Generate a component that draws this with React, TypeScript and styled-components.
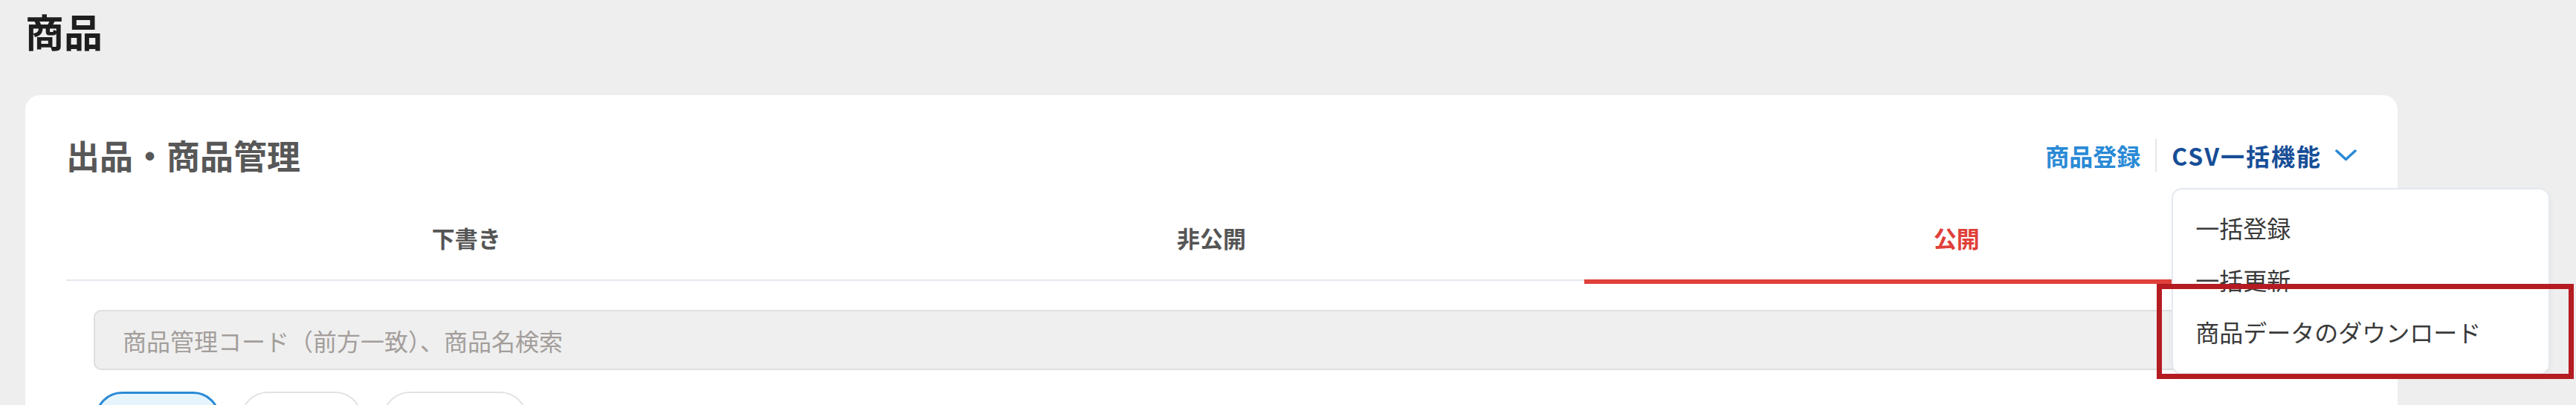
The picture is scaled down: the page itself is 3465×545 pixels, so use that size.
import React from "react";
import styled, { createGlobalStyle } from "styled-components";

const GlobalStyle = createGlobalStyle`
  html, body {
    margin: 0;
    padding: 0;
    background: #eeeeee;
  }

  body {
    font-family: "Noto Sans CJK JP", "Noto Sans", sans-serif;
    color: #333333;
  }
`;

const Page = styled.div`
  position: relative;
  height: 545px;
  overflow: hidden;
  padding: 6px 0 0 34px;
  box-sizing: border-box;
`;

const PageTitle = styled.h1`
  margin: 0 0 50px;
  font-size: 52px;
  line-height: 72px;
  font-weight: 700;
  color: #1e1e1e;
`;

const Card = styled.section`
  width: 3191px;
  min-height: 600px;
  padding: 48px 55px 0;
  box-sizing: border-box;
  background: #ffffff;
  border-radius: 20px;
`;

const CardHeader = styled.div`
  display: flex;
  align-items: center;
  justify-content: space-between;
  height: 66px;
`;

const CardTitle = styled.h2`
  margin: 0;
  font-size: 45px;
  line-height: 66px;
  font-weight: 700;
  color: #585858;
`;

const HeaderActions = styled.div`
  display: flex;
  align-items: center;
  gap: 20px;
`;

const TextLink = styled.a`
  font-size: 32px;
  font-weight: 700;
  color: #2a8ad6;
  text-decoration: none;
  line-height: 44px;
`;

const Divider = styled.span`
  width: 2px;
  height: 44px;
  background: #e6e6e6;
`;

const MenuWrap = styled.div`
  position: relative;
`;

const MenuButton = styled.button`
  display: flex;
  align-items: center;
  gap: 18px;
  padding: 0;
  border: 0;
  background: none;
  font-family: inherit;
  font-size: 32px;
  font-weight: 700;
  line-height: 44px;
  letter-spacing: 2px;
  color: #174e97;
  cursor: pointer;
`;

const Dropdown = styled.ul`
  position: absolute;
  top: calc(100% + 22px);
  left: 0;
  z-index: 5;
  width: 509px;
  margin: 0;
  padding: 16px 0 21px;
  box-sizing: border-box;
  list-style: none;
  background: #ffffff;
  border: 2px solid #e4e9f0;
  border-radius: 14px;
  box-shadow: 0 4px 10px rgba(0, 0, 0, 0.04);
`;

const MenuItem = styled.li`
  height: 70px;
  padding-left: 30px;
  font-size: 32px;
  line-height: 70px;
  color: #3a3a3a;
  white-space: nowrap;
`;

const Highlight = styled.div`
  position: absolute;
  left: -22px;
  top: 127px;
  width: 561px;
  height: 128px;
  box-sizing: border-box;
  border: 7px solid #b41c22;
  pointer-events: none;
`;

const TabList = styled.div`
  display: flex;
  margin-top: 22px;
  padding: 0 37px;
  border-bottom: 2px solid #e4e9ef;
`;

const Tab = styled.div<{ active?: boolean }>`
  position: relative;
  flex: 1;
  height: 112px;
  line-height: 112px;
  text-align: center;
  font-size: 31px;
  font-weight: 700;
  color: ${({ active }) => (active ? "#e0403a" : "#555555")};

  &::after {
    content: "";
    position: absolute;
    left: 0;
    right: 0;
    bottom: -6px;
    height: 6px;
    background: #e0403a;
    display: ${({ active }) => (active ? "block" : "none")};
  }
`;

const SearchBox = styled.input`
  display: block;
  width: calc(100% - 74px);
  height: 81px;
  margin: 39px 37px 0;
  padding: 0 0 0 37px;
  box-sizing: border-box;
  font-family: inherit;
  font-size: 32px;
  background: #efefef;
  border: 2px solid #dedede;
  border-radius: 10px;
  outline: none;

  &::placeholder {
    color: #a39e9b;
  }
`;

const FilterRow = styled.div`
  display: flex;
  gap: 28px;
  margin: 29px 0 0 39px;
`;

const Pill = styled.button<{ active?: boolean; w: number }>`
  width: ${({ w }) => w}px;
  height: 72px;
  border-radius: 36px;
  border: ${({ active }) => (active ? "3px solid #2a8ad6" : "2px solid #e2e2e2")};
  background: ${({ active }) => (active ? "#e6f5fd" : "#ffffff")};
`;

const Chevron = () => (
  <svg width="29" height="16" viewBox="0 0 29 16" fill="none">
    <polyline
      points="2,2 14.5,13.5 27,2"
      stroke="#2a8ad6"
      strokeWidth="3.5"
      strokeLinecap="round"
      strokeLinejoin="round"
    />
  </svg>
);

const menu = ["一括登録", "一括更新", "商品データのダウンロード"];
const tabs = [
  { label: "下書き", active: false },
  { label: "非公開", active: false },
  { label: "公開", active: true },
];

export default function App() {
  return (
    <>
      <GlobalStyle />
      <Page>
        <PageTitle>商品</PageTitle>
        <Card>
          <CardHeader>
            <CardTitle>出品・商品管理</CardTitle>
            <HeaderActions>
              <TextLink href="#">商品登録</TextLink>
              <Divider />
              <MenuWrap>
                <MenuButton>
                  CSV一括機能
                  <Chevron />
                </MenuButton>
                <Dropdown>
                  {menu.map((m) => (
                    <MenuItem key={m}>{m}</MenuItem>
                  ))}
                  <Highlight />
                </Dropdown>
              </MenuWrap>
            </HeaderActions>
          </CardHeader>

          <TabList>
            {tabs.map((t) => (
              <Tab key={t.label} active={t.active}>
                {t.label}
              </Tab>
            ))}
          </TabList>

          <SearchBox placeholder="商品管理コード（前方一致）、商品名検索" />

          <FilterRow>
            <Pill active w={168} aria-label="filter-1" />
            <Pill w={163} aria-label="filter-2" />
            <Pill w={194} aria-label="filter-3" />
          </FilterRow>
        </Card>
      </Page>
    </>
  );
}
